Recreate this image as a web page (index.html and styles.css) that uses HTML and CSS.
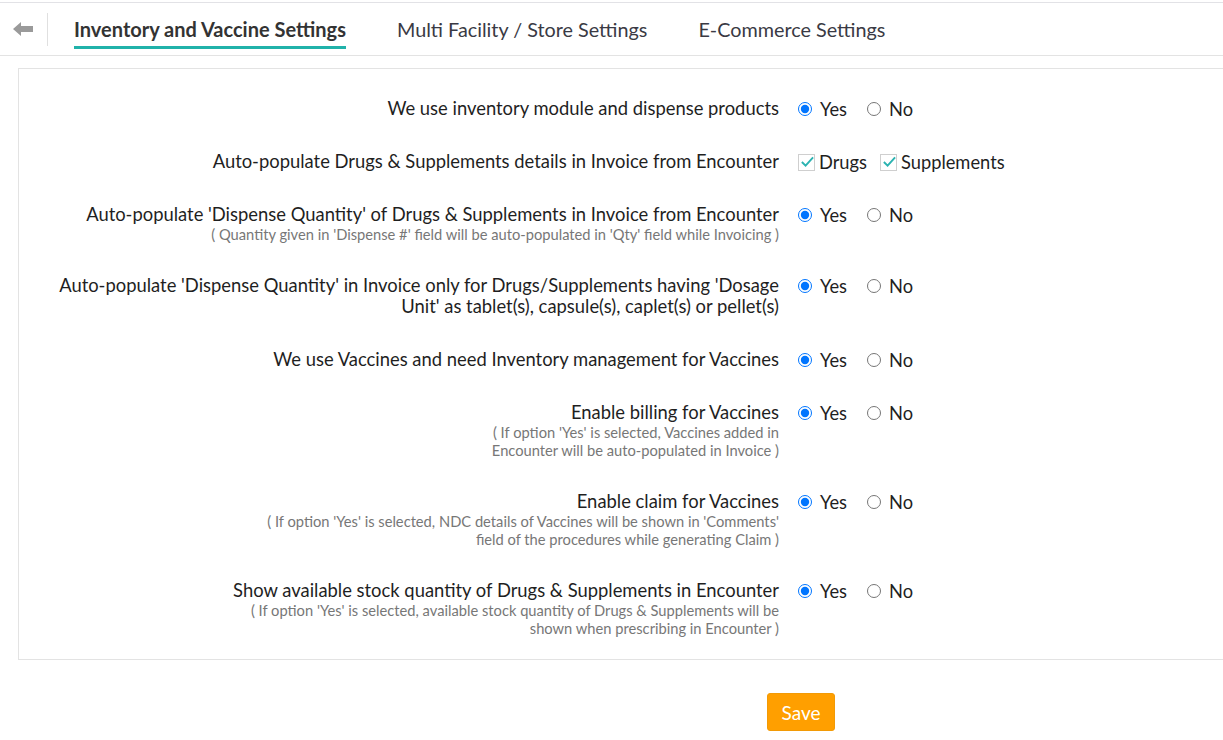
FILE: index.html
```html
<!DOCTYPE html>
<html>
<head>
<meta charset="utf-8">
<link rel="stylesheet" href="styles.css">
</head>
<body>
<div class="topline"></div>
<header class="tabs">
  <div class="back">
    <svg width="20" height="14" viewBox="0 0 20 14"><path d="M0 7 L8 0 L8 4 L20 4 L20 10 L8 10 L8 14 Z" fill="#9a9a9a"/></svg>
  </div>
  <div class="sep"></div>
  <nav class="tablist">
    <span class="tab active">Inventory and Vaccine Settings</span>
    <span class="tab">Multi Facility / Store Settings</span>
    <span class="tab">E-Commerce Settings</span>
  </nav>
</header>

<section class="panel">
  <div class="row">
    <div class="label"><div class="main">We use inventory module and dispense products</div></div>
    <div class="ctrl"><label class="opt"><input type="radio" name="r1" checked>Yes</label><label class="opt"><input type="radio" name="r1">No</label></div>
  </div>
  <div class="row">
    <div class="label"><div class="main">Auto-populate Drugs &amp; Supplements details in Invoice from Encounter</div></div>
    <div class="ctrl">
      <label class="chk"><span class="box"><svg width="15" height="12" viewBox="0 0 15 12"><path d="M2 6 L6 10 L14 1" fill="none" stroke="#2bb3b1" stroke-width="2"/></svg></span>Drugs</label>
      <label class="chk"><span class="box"><svg width="15" height="12" viewBox="0 0 15 12"><path d="M2 6 L6 10 L14 1" fill="none" stroke="#2bb3b1" stroke-width="2"/></svg></span>Supplements</label>
    </div>
  </div>
  <div class="row">
    <div class="label"><div class="main">Auto-populate 'Dispense Quantity' of Drugs &amp; Supplements in Invoice from Encounter</div>
      <div class="help">( Quantity given in 'Dispense #' field will be auto-populated in 'Qty' field while Invoicing )</div></div>
    <div class="ctrl"><label class="opt"><input type="radio" name="r3" checked>Yes</label><label class="opt"><input type="radio" name="r3">No</label></div>
  </div>
  <div class="row">
    <div class="label"><div class="main">Auto-populate 'Dispense Quantity' in Invoice only for Drugs/Supplements having 'Dosage<br>Unit' as tablet(s), capsule(s), caplet(s) or pellet(s)</div></div>
    <div class="ctrl"><label class="opt"><input type="radio" name="r4" checked>Yes</label><label class="opt"><input type="radio" name="r4">No</label></div>
  </div>
  <div class="row">
    <div class="label"><div class="main">We use Vaccines and need Inventory management for Vaccines</div></div>
    <div class="ctrl"><label class="opt"><input type="radio" name="r5" checked>Yes</label><label class="opt"><input type="radio" name="r5">No</label></div>
  </div>
  <div class="row">
    <div class="label"><div class="main">Enable billing for Vaccines</div>
      <div class="help">( If option 'Yes' is selected, Vaccines added in<br>Encounter will be auto-populated in Invoice )</div></div>
    <div class="ctrl"><label class="opt"><input type="radio" name="r6" checked>Yes</label><label class="opt"><input type="radio" name="r6">No</label></div>
  </div>
  <div class="row">
    <div class="label"><div class="main">Enable claim for Vaccines</div>
      <div class="help">( If option 'Yes' is selected, NDC details of Vaccines will be shown in 'Comments'<br>field of the procedures while generating Claim )</div></div>
    <div class="ctrl"><label class="opt"><input type="radio" name="r7" checked>Yes</label><label class="opt"><input type="radio" name="r7">No</label></div>
  </div>
  <div class="row">
    <div class="label"><div class="main">Show available stock quantity of Drugs &amp; Supplements in Encounter</div>
      <div class="help">( If option 'Yes' is selected, available stock quantity of Drugs &amp; Supplements will be<br>shown when prescribing in Encounter )</div></div>
    <div class="ctrl"><label class="opt"><input type="radio" name="r8" checked>Yes</label><label class="opt"><input type="radio" name="r8">No</label></div>
  </div>
</section>

<footer class="actions">
  <button class="save">Save</button>
</footer>
</body>
</html>
```

FILE: styles.css
```css
html, body {
  margin: 0;
  padding: 0;
  background: #fff;
  font-family: Lato, "Open Sans", sans-serif;
  color: #222;
  overflow: hidden;
}
.topline {
  height: 2px;
  border-bottom: 1px solid #e2e2e6;
  background: #fff;
}
.tabs {
  display: flex;
  align-items: center;
  height: 52px;
  border-bottom: 1px solid #e3e3e3;
}
.back {
  width: 47px;
  display: flex;
  padding-left: 13px;
  box-sizing: border-box;
}
.back svg { display: block; }
.sep {
  width: 1px;
  height: 33px;
  background: #e0e0e0;
}
.tablist {
  display: flex;
  gap: 51px;
  margin-left: 26px;
  align-self: flex-start;
}
.tab {
  display: flex;
  align-items: center;
  font-size: 19.8px;
  color: #3a3a44;
  height: 46px;
  box-sizing: border-box;
  padding-top: 9px;
  border-bottom: 3px solid transparent;
}
.tab.active {
  font-weight: 700;
  font-size: 20px;
  color: #333;
  border-bottom-color: #20b2aa;
}
.panel {
  margin: 12px 0 0 18px;
  border: 1px solid #e3e3e3;
  border-right: none;
  padding: 13px 0 6px 0;
}
.row {
  display: flex;
  align-items: flex-start;
  padding: 16px 0;
}
.label {
  width: 730px;
  margin-left: 30px;
  text-align: right;
}
.main {
  font-size: 18.4px;
  line-height: 21px;
  color: #1f1f1f;
}
.help {
  font-size: 14.7px;
  line-height: 18px;
  color: #777;
}
.ctrl {
  display: flex;
  align-items: center;
  margin-left: 19px;
  height: 21px;
  font-size: 18.3px;
}
.opt {
  display: flex;
  align-items: center;
  margin-right: 20px;
  color: #1f1f1f;
}
.opt input {
  width: 14px;
  height: 14px;
  margin: 0 8px 0 0;
  accent-color: #0075ff;
}
.chk {
  display: flex;
  align-items: center;
  margin-right: 13px;
  color: #1f1f1f;
}
.box {
  width: 17px;
  height: 17px;
  border: 1px solid #cfcfcf;
  box-sizing: border-box;
  display: flex;
  align-items: center;
  justify-content: center;
  margin-right: 4px;
  margin-top: 1px;
}
.box svg { display: block; margin-left: 1px; }
.actions {
  padding: 33px 0 0 767px;
}
.save {
  background: #ff9f00;
  color: #fff;
  border: 1px solid #f29a06;
  border-radius: 3px;
  font-family: Lato, sans-serif;
  font-size: 19px;
  width: 68px;
  height: 38px;
  padding: 0;
}
```
